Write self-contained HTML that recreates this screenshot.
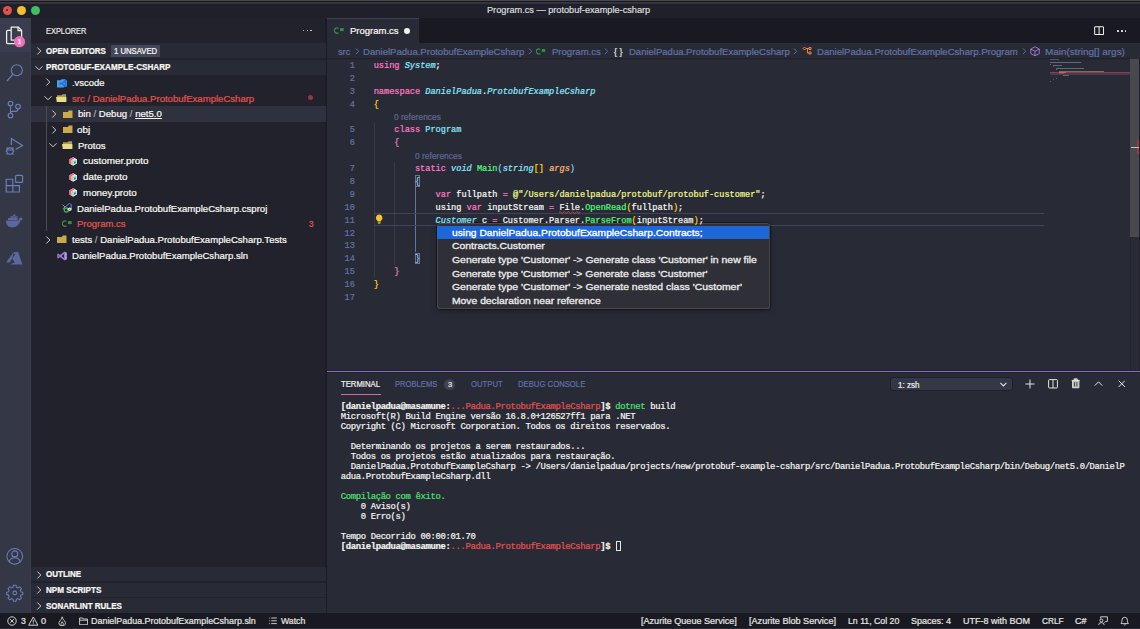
<!DOCTYPE html><html><head><meta charset="utf-8"><title>Program.cs — protobuf-example-csharp</title><style>

html,body{margin:0;padding:0;background:#282a36;}
body{width:1140px;height:629px;overflow:hidden;position:relative;font-family:"Liberation Sans",sans-serif;}
#r{position:absolute;left:0;top:0;width:1140px;height:629px;overflow:hidden;}
#r>div,#r>svg,#r>span{position:absolute;}
.t{white-space:pre;display:block;-webkit-text-stroke:0.22px;}
.c{white-space:pre;font-family:"Liberation Mono",monospace;display:block;}
i{font-style:italic}

</style></head><body><div id="r">
<div style="left:0px;top:0px;width:1140px;height:629px;background:#282a36;"></div>
<div style="left:0px;top:0px;width:1140px;height:1px;background:#4b4649;"></div>
<div style="left:0px;top:1px;width:1140px;height:1px;background:#17171c;"></div>
<div style="left:0px;top:2px;width:1140px;height:2px;background:linear-gradient(#3c3d49,#2b2c37);"></div>
<div style="left:0px;top:4px;width:1140px;height:14px;background:#1f202a;"></div>
<div style="left:2.5999999999999996px;top:5.800000000000001px;width:9px;height:9px;background:#e0524f;border-radius:50%;"></div>
<div style="left:16.9px;top:5.800000000000001px;width:9px;height:9px;background:#f2bf30;border-radius:50%;"></div>
<div style="left:31.200000000000003px;top:5.800000000000001px;width:9px;height:9px;background:#41be62;border-radius:50%;"></div>
<div style="left:6.2px;top:9.4px;width:1.8px;height:1.8px;background:#7c1512;border-radius:50%;"></div>
<div style="left:0px;top:18px;width:31px;height:595px;background:#343746;"></div>
<div style="left:0px;top:18px;width:31px;height:34.2px;background:#3a3d4e;"></div>
<div style="left:30px;top:18px;width:1px;height:595px;background:#3a3d4d;"></div>
<div style="left:31px;top:18px;width:295px;height:595px;background:#21222c;"></div>
<div style="left:325.3px;top:18px;width:1.5px;height:595px;background:#1b1c25;"></div>
<div style="left:31px;top:42.8px;width:295px;height:15.6px;background:#282a36;"></div>
<div style="left:31px;top:59.6px;width:295px;height:15.4px;background:#282a36;"></div>
<div style="left:31px;top:566.8px;width:295px;height:14.6px;background:#282a36;"></div>
<div style="left:31px;top:582.5px;width:295px;height:14.7px;background:#282a36;"></div>
<div style="left:31px;top:598.2px;width:295px;height:14.8px;background:#282a36;"></div>
<div style="left:302.85px;top:29.5px;width:1.5px;height:1.5px;background:#d8d8d4;border-radius:50%;"></div>
<div style="left:306.65px;top:29.5px;width:1.5px;height:1.5px;background:#d8d8d4;border-radius:50%;"></div>
<div style="left:310.45px;top:29.5px;width:1.5px;height:1.5px;background:#d8d8d4;border-radius:50%;"></div>
<svg style="left:34.90px;top:47.00px" width="8.0" height="8.0" viewBox="0 0 8 8"><path d="M2.3 0.5 L5.8 4 L2.3 7.5" fill="none" stroke="#cdcdc8" stroke-width="1.00"/></svg>
<div style="left:111px;top:45.2px;width:48.8px;height:11.8px;background:#44475a;border-radius:1px;"></div>
<svg style="left:34.60px;top:63.60px" width="8.0" height="8.0" viewBox="0 0 8 8"><path d="M0.5 2.3 L4 5.8 L7.5 2.3" fill="none" stroke="#cdcdc8" stroke-width="1.00"/></svg>
<svg style="left:34.90px;top:570.60px" width="8.0" height="8.0" viewBox="0 0 8 8"><path d="M2.3 0.5 L5.8 4 L2.3 7.5" fill="none" stroke="#cdcdc8" stroke-width="1.00"/></svg>
<svg style="left:34.90px;top:586.30px" width="8.0" height="8.0" viewBox="0 0 8 8"><path d="M2.3 0.5 L5.8 4 L2.3 7.5" fill="none" stroke="#cdcdc8" stroke-width="1.00"/></svg>
<svg style="left:34.90px;top:602.00px" width="8.0" height="8.0" viewBox="0 0 8 8"><path d="M2.3 0.5 L5.8 4 L2.3 7.5" fill="none" stroke="#cdcdc8" stroke-width="1.00"/></svg>
<div style="left:31px;top:105.9px;width:295px;height:15.7px;background:#2f313e;"></div>
<div style="left:45.6px;top:105.9px;width:1.1px;height:125.2px;background:#4d4a52;"></div>
<svg style="left:44.00px;top:78.40px" width="8.0" height="8.0" viewBox="0 0 8 8"><path d="M2.3 0.5 L5.8 4 L2.3 7.5" fill="none" stroke="#cdcdc8" stroke-width="1.00"/></svg>
<svg style="left:57.1px;top:78.80px" width="10" height="8.8" viewBox="0 0 20 17.6"><path d="M0 2.6 H7.4 L9.2 0.6 H17 V3 H20 V15 H15 L13 17 H0 Z" fill="#4a9fe6"/><path d="M15.6 1.6 L19 3.2 V14.8 L15.6 16.6 L8.6 10.4 L6.4 12.2 L5 11.4 V7 L6.4 6.2 L8.6 8 Z M15.4 6.4 L11.4 9.2 L15.4 12 Z" fill="#1d6ee0"/></svg>
<svg style="left:44.00px;top:94.12px" width="8.0" height="8.0" viewBox="0 0 8 8"><path d="M0.5 2.3 L4 5.8 L7.5 2.3" fill="none" stroke="#cdcdc8" stroke-width="1.00"/></svg>
<svg style="left:56px;top:93.92px" width="11" height="8.4" viewBox="0 0 11 8.4"><path d="M1 1.3 H5.6 L6.6 0.3 H10.1 V7.6 H1 Z" fill="#b39b49"/><rect x="7.3" y="0.9" width="2.4" height="1.7" fill="#8d92a6"/><path d="M0 2.9 H9.6 L10.4 3.3 V7.9 H0.8 Z" fill="#e9dd86"/></svg>
<div style="left:308.2px;top:95.4px;width:5px;height:5px;background:#8c3b42;border-radius:50%;"></div>
<svg style="left:49.70px;top:109.84px" width="8.0" height="8.0" viewBox="0 0 8 8"><path d="M2.3 0.5 L5.8 4 L2.3 7.5" fill="none" stroke="#cdcdc8" stroke-width="1.00"/></svg>
<svg style="left:63px;top:109.64px" width="9.6" height="8.2" viewBox="0 0 9.6 8.2"><path d="M0 1.9 H4.9 L5.8 0.5 H9.5 V8 H0 Z" fill="#c9aa4c"/></svg>
<svg style="left:49.70px;top:125.56px" width="8.0" height="8.0" viewBox="0 0 8 8"><path d="M2.3 0.5 L5.8 4 L2.3 7.5" fill="none" stroke="#cdcdc8" stroke-width="1.00"/></svg>
<svg style="left:63px;top:125.36px" width="9.6" height="8.2" viewBox="0 0 9.6 8.2"><path d="M0 1.9 H4.9 L5.8 0.5 H9.5 V8 H0 Z" fill="#c9aa4c"/></svg>
<svg style="left:49.00px;top:141.28px" width="8.0" height="8.0" viewBox="0 0 8 8"><path d="M0.5 2.3 L4 5.8 L7.5 2.3" fill="none" stroke="#cdcdc8" stroke-width="1.00"/></svg>
<svg style="left:62px;top:141.08px" width="11" height="8.4" viewBox="0 0 11 8.4"><path d="M1 1.3 H5.6 L6.6 0.3 H10.1 V7.6 H1 Z" fill="#b39b49"/><rect x="7.3" y="0.9" width="2.4" height="1.7" fill="#8d92a6"/><path d="M0 2.9 H9.6 L10.4 3.3 V7.9 H0.8 Z" fill="#e9dd86"/></svg>
<svg style="left:68.8px;top:156.90px" width="8.4" height="8.9" viewBox="0 0 17 18"><path d="M8.5 0.4 L16.2 4.7 V13.3 L8.5 17.6 L0.8 13.3 V4.7 Z" fill="#f1efea"/><path d="M8.5 0.4 L0.8 4.7 V13.3 L5 15.6 V6.6 L11.6 2.2 Z" fill="#e95fac"/><path d="M5 6.6 L10.6 3.6 L11 6.6 L8.4 8 V16.6 L5 15.4 Z" fill="#d2d95a"/><path d="M8.8 8.4 L15 5.8 V12.2 L8.8 15.2 Z" fill="#82c6f3"/><path d="M10.2 10 L13.4 8.8 V12 L10.2 13.4 Z" fill="#1d6fe0"/></svg>
<svg style="left:68.8px;top:172.62px" width="8.4" height="8.9" viewBox="0 0 17 18"><path d="M8.5 0.4 L16.2 4.7 V13.3 L8.5 17.6 L0.8 13.3 V4.7 Z" fill="#f1efea"/><path d="M8.5 0.4 L0.8 4.7 V13.3 L5 15.6 V6.6 L11.6 2.2 Z" fill="#e95fac"/><path d="M5 6.6 L10.6 3.6 L11 6.6 L8.4 8 V16.6 L5 15.4 Z" fill="#d2d95a"/><path d="M8.8 8.4 L15 5.8 V12.2 L8.8 15.2 Z" fill="#82c6f3"/><path d="M10.2 10 L13.4 8.8 V12 L10.2 13.4 Z" fill="#1d6fe0"/></svg>
<svg style="left:68.8px;top:188.34px" width="8.4" height="8.9" viewBox="0 0 17 18"><path d="M8.5 0.4 L16.2 4.7 V13.3 L8.5 17.6 L0.8 13.3 V4.7 Z" fill="#f1efea"/><path d="M8.5 0.4 L0.8 4.7 V13.3 L5 15.6 V6.6 L11.6 2.2 Z" fill="#e95fac"/><path d="M5 6.6 L10.6 3.6 L11 6.6 L8.4 8 V16.6 L5 15.4 Z" fill="#d2d95a"/><path d="M8.8 8.4 L15 5.8 V12.2 L8.8 15.2 Z" fill="#82c6f3"/><path d="M10.2 10 L13.4 8.8 V12 L10.2 13.4 Z" fill="#1d6fe0"/></svg>
<svg style="left:62.4px;top:202.96000000000004px" width="10.6" height="10.4" viewBox="0 0 21.2 20.8"><path d="M1 3.5 L6 8 L1.5 12" fill="none" stroke="#9aa3c4" stroke-width="1.8"/><path d="M6 8 L14.5 1 L18.5 3 V12" fill="none" stroke="#6d7fd0" stroke-width="2"/><circle cx="8.6" cy="14.2" r="4.2" fill="none" stroke="#3fb558" stroke-width="2.6"/><circle cx="15.6" cy="12.6" r="3.6" fill="#e6e6ea"/><circle cx="15.6" cy="12.6" r="1.3" fill="#50535f"/><rect x="11" y="11.4" width="3" height="2.6" fill="#e6e6ea"/></svg>
<svg style="left:62px;top:220.28000000000003px" width="10.5" height="7.2" viewBox="0 0 21 14.4"><path d="M9 3 A5.2 5.2 0 1 0 9 11.4" fill="none" stroke="#3b8b47" stroke-width="2.7"/><rect x="12" y="2.2" width="7.4" height="6" fill="#3b8b47"/></svg>
<svg style="left:44.00px;top:235.60px" width="8.0" height="8.0" viewBox="0 0 8 8"><path d="M2.3 0.5 L5.8 4 L2.3 7.5" fill="none" stroke="#cdcdc8" stroke-width="1.00"/></svg>
<svg style="left:57px;top:235.40000000000003px" width="9.6" height="8.2" viewBox="0 0 9.6 8.2"><path d="M0 1.9 H4.9 L5.8 0.5 H9.5 V8 H0 Z" fill="#c9aa4c"/></svg>
<svg style="left:56.6px;top:250.52px" width="10.2" height="10" viewBox="0 0 20.4 20"><path d="M14.6 1.2 L19.6 3.4 V16.6 L14.6 18.8 Z" fill="#b79cf2"/><path d="M15 3.4 L6 10 L15 16.6" fill="none" stroke="#9b7de0" stroke-width="3.2"/><path d="M1.6 5.6 V14.4 M1.6 6 L6.4 10 L1.6 14" fill="none" stroke="#9b7de0" stroke-width="2.2" stroke-linejoin="round"/></svg>
<svg style="left:0;top:18px" width="31" height="260" viewBox="0 0 31 260">
<g fill="none" stroke="#f1f1ec" stroke-width="1.25" stroke-linejoin="round">
<path d="M11.2 9 H18.2 L21.6 12.4 V22 H11.2 Z"/><path d="M18 9 V12.6 H21.6"/>
<path d="M11 12.4 H7.6 Q6.6 12.4 6.6 13.4 V24.6 Q6.6 25.6 7.6 25.6 H15.4 Q16.4 25.6 16.4 24.6 V22.2"/>
</g>
<circle cx="19.5" cy="23.7" r="5.6" fill="#f06fb8"/>
<g fill="none" stroke="#6b7fb8" stroke-width="1.15">
<circle cx="16.8" cy="52.2" r="5.5"/><path d="M13 56.2 L7 63"/>
<circle cx="10.5" cy="85.5" r="2.3"/><circle cx="10.5" cy="97.6" r="2.3"/><circle cx="18" cy="88.6" r="2.3"/>
<path d="M10.5 87.8 V95.3"/><path d="M18 90.9 Q18 93.4 15 93.4 H12.5 Q10.5 93.4 10.5 95"/>
<path d="M11.4 127 V120.5 L22.6 127.4 L15.6 131.6"/>
<circle cx="10" cy="133" r="3.2"/><path d="M6.5 129.5 L8 131 M13.5 129.5 L12 131 M5.6 133 H6.8 M13.2 133 H14.4 M6.5 136.6 L8 135.2 M13.5 136.6 L12 135.2 M7 132 H13"/>
<path d="M6.2 161.2 H12.8 V174 H6.2 Z M6.2 167.6 H19.4 V174 H12.8 M12.8 167.6 V174"/>
<rect x="15.6" y="157.4" width="7" height="7" rx="1"/>
</g>
<path d="M5.8 202.4 H18.5 Q19 199.6 21.2 199.2 Q21.8 200.6 22.8 200.8 Q22.2 202.2 20.6 202.6 Q18.4 209.4 12 209.4 Q6.4 209.4 5.8 202.4 Z M8 200 H17.6 V202 H8 Z M10.4 198.2 H17.6 V199.8 H10.4 Z M13 196.6 H15.4 V198 H13 Z" fill="#5b679d"/>
<path d="M13.8 234 H18.2 L22.4 246.4 H9.4 L14.8 244.6 L12.2 240.6 Z M13 235 L6 244.6 H9.6 L15.2 236.2 Z" fill="#5b679d"/>
</svg>
<svg style="left:4.5px;top:545.9px" width="20.6" height="58.07" viewBox="0 0 22 62">
<g fill="none" stroke="#6b7fb8" stroke-width="1.1">
<circle cx="10.4" cy="11" r="8.4"/><circle cx="10.4" cy="8.4" r="3.2"/><path d="M4.6 17 Q5.4 12.6 10.4 12.6 Q15.4 12.6 16.2 17"/>
<g transform="translate(0,2.4)"><circle cx="10.4" cy="47.8" r="2"/>
<path d="M9 39.4 H11.8 L12.2 41.6 L13.8 42.4 L15.8 41.2 L17.6 43.2 L16.4 45 L17 46.6 L19 47 V49.4 L17 49.8 L16.4 51.4 L17.6 53.2 L15.8 55 L13.8 53.8 L12.2 54.6 L11.8 56.6 H9 L8.6 54.6 L7 53.8 L5 55 L3.2 53.2 L4.4 51.4 L3.8 49.8 L1.8 49.4 V47 L3.8 46.6 L4.4 45 L3.2 43.2 L5 41.2 L7 42.4 L8.6 41.6 Z"/></g>
</g></svg>
<div style="left:327px;top:18px;width:813px;height:25px;background:#191a21;"></div>
<div style="left:327px;top:18px;width:92px;height:25px;background:#282a36;"></div>
<div style="left:327px;top:18px;width:92px;height:1px;background:#3d3f4d;"></div>
<svg style="left:333.8px;top:27.4px" width="10.5" height="7.2" viewBox="0 0 21 14.4"><path d="M9 3 A5.2 5.2 0 1 0 9 11.4" fill="none" stroke="#3b8b47" stroke-width="2.7"/><rect x="12" y="2.2" width="7.4" height="6" fill="#3b8b47"/></svg>
<div style="left:403.9px;top:28px;width:6.2px;height:6.2px;background:#f1f1ec;border-radius:50%;"></div>
<svg style="left:1093.9px;top:25.9px" width="10.2" height="9.3" viewBox="0 0 11 10"><rect x="0.7" y="0.7" width="9.6" height="8.6" rx="1" fill="none" stroke="#f1f1ec" stroke-width="1.1"/><path d="M5.5 0.7 V9.3" stroke="#f1f1ec" stroke-width="1.1"/></svg>
<div style="left:1117.15px;top:29.9px;width:1.7px;height:1.7px;background:#ecece8;border-radius:50%;"></div>
<div style="left:1120.95px;top:29.9px;width:1.7px;height:1.7px;background:#ecece8;border-radius:50%;"></div>
<div style="left:1124.75px;top:29.9px;width:1.7px;height:1.7px;background:#ecece8;border-radius:50%;"></div>
<div style="left:327px;top:43px;width:813px;height:15.7px;background:#282a36;"></div>
<svg style="left:353.72px;top:48.22px" width="6.56" height="6.56" viewBox="0 0 8 8"><path d="M2.3 0.5 L5.8 4 L2.3 7.5" fill="none" stroke="#5f6c98" stroke-width="1.22"/></svg>
<svg style="left:527.02px;top:48.22px" width="6.56" height="6.56" viewBox="0 0 8 8"><path d="M2.3 0.5 L5.8 4 L2.3 7.5" fill="none" stroke="#5f6c98" stroke-width="1.22"/></svg>
<svg style="left:536.4px;top:47.78px" width="9.975" height="6.84" viewBox="0 0 21 14.4"><path d="M9 3 A5.2 5.2 0 1 0 9 11.4" fill="none" stroke="#3b8b47" stroke-width="2.7"/><rect x="12" y="2.2" width="7.4" height="6" fill="#3b8b47"/></svg>
<svg style="left:603.12px;top:48.22px" width="6.56" height="6.56" viewBox="0 0 8 8"><path d="M2.3 0.5 L5.8 4 L2.3 7.5" fill="none" stroke="#5f6c98" stroke-width="1.22"/></svg>
<svg style="left:791.62px;top:48.22px" width="6.56" height="6.56" viewBox="0 0 8 8"><path d="M2.3 0.5 L5.8 4 L2.3 7.5" fill="none" stroke="#5f6c98" stroke-width="1.22"/></svg>
<svg style="left:802.4px;top:46.4px" width="10" height="10" viewBox="0 0 20 20"><g fill="none" stroke="#e8893c" stroke-width="2"><path d="M2 5 L5 2 L8 5 L5 8 Z"/><path d="M8 5 H14"/><path d="M11 5 V14 H14"/><path d="M14 3 h4 v4 h-4 z M14 12 h4 v4 h-4 z" /></g></svg>
<svg style="left:1020.62px;top:48.22px" width="6.56" height="6.56" viewBox="0 0 8 8"><path d="M2.3 0.5 L5.8 4 L2.3 7.5" fill="none" stroke="#5f6c98" stroke-width="1.22"/></svg>
<svg style="left:1030.4px;top:46.2px" width="10" height="10.6" viewBox="0 0 20 21"><g fill="none" stroke="#b180e8" stroke-width="1.7" stroke-linejoin="round"><path d="M10 1.5 L18.5 6 V15 L10 19.5 L1.5 15 V6 Z"/><path d="M1.5 6 L10 10.5 L18.5 6 M10 10.5 V19.5"/></g></svg>
<div style="left:327px;top:58.2px;width:803px;height:1.6px;background:linear-gradient(#1d1e27,#282a36);"></div>
<div style="left:373.5px;top:122.98999999999998px;width:0.8px;height:154.45800000000003px;background:#383a49;"></div>
<div style="left:394.3px;top:161.624px;width:0.8px;height:102.94600000000001px;background:#383a49;"></div>
<div style="left:415.3px;top:187.38px;width:0.9px;height:64.312px;background:#63759f;"></div>
<div style="left:373.6px;top:213.2px;width:670.4px;height:1px;background:#414458;"></div>
<div style="left:373.6px;top:224.9px;width:670.4px;height:1px;background:#414458;"></div>
<svg style="left:558.9px;top:210.55px" width="21.3" height="3.1" viewBox="0 0 21.3 3.1"><path d="M0 1.55 Q1.05 -0.45 2.10 1.55 Q3.15 3.54 4.20 1.55 Q5.25 -0.45 6.30 1.55 Q7.35 3.54 8.40 1.55 Q9.45 -0.45 10.50 1.55 Q11.55 3.54 12.60 1.55 Q13.65 -0.45 14.70 1.55 Q15.75 3.54 16.80 1.55 Q17.85 -0.45 18.90 1.55 Q19.95 3.54 21.00 1.55 Q21.15 -0.45 21.30 1.55" fill="none" stroke="#ee5350" stroke-width="0.85"/></svg>
<div style="left:414.7px;top:175.302px;width:5.6px;height:11.6px;background:transparent;border:0.7px solid #6f7284;box-sizing:border-box;"></div>
<div style="left:414.7px;top:252.57000000000002px;width:5.6px;height:11.6px;background:transparent;border:0.7px solid #6f7284;box-sizing:border-box;"></div>
<svg style="left:375.2px;top:213.94px" width="8.4" height="11" viewBox="0 0 17 22"><path d="M8.5 1 A6.6 6.6 0 0 0 4.4 12.8 Q5.4 13.8 5.4 15 H11.6 Q11.6 13.8 12.6 12.8 A6.6 6.6 0 0 0 8.5 1 Z" fill="#f5c431"/><rect x="5.6" y="15.8" width="5.8" height="1.8" fill="#e2b02a"/><rect x="6" y="18.4" width="5" height="1.8" fill="#c9982a"/></svg>
<div style="left:1050.0px;top:59.3px;width:9.308px;height:1px;background:#9a7ba0;opacity:.5;"></div>
<div style="left:1050.0px;top:62.16px;width:30.788px;height:1px;background:#8fa9c0;opacity:.5;"></div>
<div style="left:1050.0px;top:63.589999999999996px;width:0.716px;height:1px;background:#b9a24a;opacity:.5;"></div>
<div style="left:1052.864px;top:65.02px;width:9.308px;height:1px;background:#90a0b8;opacity:.5;"></div>
<div style="left:1052.864px;top:66.45px;width:0.716px;height:1px;background:#a070a0;opacity:.5;"></div>
<div style="left:1055.728px;top:67.88px;width:27.924px;height:1px;background:#8fb0a0;opacity:.5;"></div>
<div style="left:1055.728px;top:69.31px;width:0.716px;height:1px;background:#7fa0c0;opacity:.5;"></div>
<div style="left:1058.592px;top:70.74px;width:45.824px;height:1px;background:#b8bb88;opacity:.5;"></div>
<div style="left:1058.592px;top:72.17px;width:35.083999999999996px;height:1px;background:#a8b0a8;opacity:.5;"></div>
<div style="left:1058.592px;top:73.6px;width:37.232px;height:1px;background:#a0b8b0;opacity:.5;"></div>
<div style="left:1055.728px;top:77.89px;width:0.716px;height:1px;background:#7fa0c0;opacity:.5;"></div>
<div style="left:1052.864px;top:79.32px;width:0.716px;height:1px;background:#a070a0;opacity:.5;"></div>
<div style="left:1050.0px;top:80.75px;width:0.716px;height:1px;background:#b9a24a;opacity:.5;"></div>
<div style="left:1050px;top:72px;width:80px;height:1.3px;background:#a8323a;"></div>
<div style="left:1050px;top:73.4px;width:80px;height:1.4px;background:#3d4158;"></div>
<div style="left:1058.6px;top:72.0px;width:7px;height:1.3px;background:#e05555;"></div>
<div style="left:1058.6px;top:73.3px;width:5px;height:1.0px;background:#d04a4a;opacity:.6;"></div>
<div style="left:1063px;top:74.8px;width:6px;height:1px;background:#3fae58;opacity:.7;"></div>
<div style="left:1130px;top:59px;width:9px;height:178.4px;background:#48494f;"></div>
<div style="left:1139px;top:59px;width:1px;height:312px;background:#1f2029;"></div>
<div style="left:1130px;top:237.4px;width:0.8px;height:134px;background:#22232d;"></div>
<div style="left:1137.4px;top:139.6px;width:1.6px;height:14.4px;background:#a83840;opacity:.85;"></div>
<div style="left:1131px;top:146.9px;width:8.4px;height:0.9px;background:#c4c4c4;"></div>
<div style="left:436.5px;top:223.3px;width:333.3px;height:86.2px;background:#2f3037;border-radius:3.5px;box-shadow:inset 0 0 0 0.7px #505158, 0 0 0 0.7px #13131a, 0 2px 6px rgba(0,0,0,.3);"></div>
<div style="left:437.1px;top:226.1px;width:332.1px;height:13.3px;background:#1d67d8;"></div>
<div style="left:326.8px;top:371px;width:813.2px;height:242px;background:#282a36;"></div>
<div style="left:326.8px;top:369.9px;width:813.2px;height:2.9px;background:#21222c;"></div>
<div style="left:326.8px;top:370.55px;width:813.2px;height:1.5px;background:#8a6bc2;"></div>
<div style="left:341px;top:393.8px;width:39.6px;height:1px;background:#d66aa8;"></div>
<div style="left:444.2px;top:379.2px;width:11px;height:11px;background:#3f4254;border-radius:50%;"></div>
<div style="left:891.4px;top:378px;width:121px;height:12px;background:#343746;border-radius:2.5px;box-shadow:0 0 0 0.7px #1d1e27;"></div>
<svg style="left:1000.10px;top:381.00px" width="6.8" height="6.8" viewBox="0 0 8 8"><path d="M0.5 2.3 L4 5.8 L7.5 2.3" fill="none" stroke="#e8e8e4" stroke-width="1.18"/></svg>
<svg style="left:1024.6px;top:378.7px" width="10" height="10" viewBox="0 0 10 10"><path d="M5 0.5 V9.5 M0.5 5 H9.5" stroke="#e4e4e0" stroke-width="1"/></svg>
<svg style="left:1047.9px;top:379px" width="10" height="9.6" viewBox="0 0 10 9.6"><rect x="0.6" y="0.6" width="8.8" height="8.4" rx="0.8" fill="none" stroke="#e4e4e0" stroke-width="1"/><path d="M5 0.6 V9" stroke="#e4e4e0" stroke-width="1"/></svg>
<svg style="left:1070.6px;top:378.4px" width="9.4" height="10.6" viewBox="0 0 9.4 10.6"><path d="M0.6 2.4 H8.8 M3.2 2.2 V0.8 H6.2 V2.2 M1.5 2.6 V9.8 H7.9 V2.6 Z" fill="#bdbdb8" stroke="#e4e4e0" stroke-width="0.9"/><path d="M3.5 4.2 V8.4 M5.9 4.2 V8.4" stroke="#282a36" stroke-width="0.8"/></svg>
<svg style="left:1094px;top:380px" width="9" height="7" viewBox="0 0 9 7"><path d="M0.8 5.6 L4.5 1.8 L8.2 5.6" fill="none" stroke="#e4e4e0" stroke-width="1"/></svg>
<svg style="left:1117.5px;top:380px" width="7.6" height="7.6" viewBox="0 0 7.6 7.6"><path d="M0.6 0.6 L7 7 M7 0.6 L0.6 7" stroke="#e4e4e0" stroke-width="1"/></svg>
<div style="left:615.6px;top:541px;width:5.2px;height:9.8px;background:transparent;border:0.8px solid #e8e8e4;box-sizing:border-box;"></div>
<div style="left:0px;top:613px;width:1140px;height:16px;background:#191a21;"></div>
<div style="left:0px;top:628px;width:1140px;height:1px;background:#2a2b33;"></div>
<svg style="left:7.4px;top:616px" width="10" height="10" viewBox="0 0 10 10"><circle cx="5" cy="5" r="4.2" fill="none" stroke="#e6e6e2" stroke-width="0.9"/><path d="M3.2 3.2 L6.8 6.8 M6.8 3.2 L3.2 6.8" stroke="#e6e6e2" stroke-width="0.9"/></svg>
<svg style="left:27.8px;top:616px" width="10.6" height="10" viewBox="0 0 10.6 10"><path d="M5.3 1 L9.9 9.2 H0.7 Z" fill="none" stroke="#e6e6e2" stroke-width="0.9" stroke-linejoin="round"/><path d="M5.3 4 V6.6 M5.3 7.4 V8.2" stroke="#e6e6e2" stroke-width="0.9"/></svg>
<svg style="left:58.2px;top:615.6px" width="8.4" height="10.6" viewBox="0 0 8.4 10.6"><path d="M4.2 0.8 Q4.6 3 6.4 4.8 Q7.8 6.4 7.4 8 Q6.8 10 4.2 10 Q1.6 10 1 8 Q0.6 6.4 2 4.8 Q3.8 3 4.2 0.8 Z M4.2 5.6 Q2.8 7.6 3 8.6 Q3.4 9.8 4.2 9.8 Q5 9.8 5.4 8.6 Q5.6 7.6 4.2 5.6 Z" fill="none" stroke="#e6e6e2" stroke-width="0.8"/></svg>
<svg style="left:79.2px;top:616.6px" width="9.2" height="8.4" viewBox="0 0 9.2 8.4"><path d="M0.6 1 H3.6 L4.4 2 H8.6 V7.8 H0.6 Z M0.6 3.2 H8.6" fill="none" stroke="#e6e6e2" stroke-width="0.85"/></svg>
<svg style="left:268.8px;top:617.2px" width="8" height="7.6" viewBox="0 0 8 7.6"><path d="M2.2 1 H7.8 M2.2 3.8 H7.8 M2.2 6.6 H7.8 M0.2 1 H1 M0.2 3.8 H1 M0.2 6.6 H1" stroke="#e6e6e2" stroke-width="0.85"/></svg>
<svg style="left:1098px;top:616.4px" width="10" height="9.6" viewBox="0 0 10 9.6"><path d="M2.6 0.8 H9.4 V5.4 H7.6 L6.4 6.8 M2.6 0.8 V2.4" fill="none" stroke="#e6e6e2" stroke-width="0.85"/><circle cx="3.4" cy="4.4" r="1.5" fill="none" stroke="#e6e6e2" stroke-width="0.85"/><path d="M0.6 9 Q0.8 6.6 3.4 6.6 Q6 6.6 6.2 9" fill="none" stroke="#e6e6e2" stroke-width="0.85"/></svg>
<svg style="left:1119.6px;top:616px" width="9.4" height="10" viewBox="0 0 9.4 10"><path d="M1 7.6 Q2 6.6 2 4.4 Q2 1.2 4.7 1.2 Q7.4 1.2 7.4 4.4 Q7.4 6.6 8.4 7.6 Z M3.8 8.6 Q4.7 9.6 5.6 8.6" fill="none" stroke="#e6e6e2" stroke-width="0.85" stroke-linejoin="round"/></svg>
<span class="t" id="t0" style="left:487px;top:4px;height:13.02px;line-height:13.02px;font-size:9.3px;color:#dcdcdc;transform:scaleX(0.9870);transform-origin:0 50%;">Program.cs — protobuf-example-csharp</span>
<span class="t" id="t1" style="left:45.9px;top:26px;height:11.48px;line-height:11.48px;font-size:8.2px;color:#e6e6e1;transform:scaleX(0.9060);transform-origin:0 50%;">EXPLORER</span>
<span class="t" id="t2" style="left:45.9px;top:46px;height:11.48px;line-height:11.48px;font-size:8.2px;color:#f8f8f2;font-weight:700;transform:scaleX(0.9703);transform-origin:0 50%;">OPEN EDITORS</span>
<span class="t" id="t3" style="left:113.9px;top:46px;height:11.48px;line-height:11.48px;font-size:8.2px;color:#f8f8f2;transform:scaleX(0.9408);transform-origin:0 50%;">1 UNSAVED</span>
<span class="t" id="t4" style="left:45.9px;top:62px;height:11.48px;line-height:11.48px;font-size:8.2px;color:#f8f8f2;font-weight:700;transform:scaleX(0.9928);transform-origin:0 50%;">PROTOBUF-EXAMPLE-CSHARP</span>
<span class="t" id="t5" style="left:46px;top:569px;height:11.48px;line-height:11.48px;font-size:8.2px;color:#f8f8f2;font-weight:700;transform:scaleX(0.9795);transform-origin:0 50%;">OUTLINE</span>
<span class="t" id="t6" style="left:46px;top:585px;height:11.48px;line-height:11.48px;font-size:8.2px;color:#f8f8f2;font-weight:700;transform:scaleX(0.9898);transform-origin:0 50%;">NPM SCRIPTS</span>
<span class="t" id="t7" style="left:46px;top:601px;height:11.48px;line-height:11.48px;font-size:8.2px;color:#f8f8f2;font-weight:700;transform:scaleX(0.9745);transform-origin:0 50%;">SONARLINT RULES</span>
<span class="t" id="t8" style="left:71.8px;top:76px;height:13.16px;line-height:13.16px;font-size:9.4px;color:#f8f8f2;transform:scaleX(1.0027);transform-origin:0 50%;">.vscode</span>
<span class="t" id="t9" style="left:72px;top:92px;height:13.16px;line-height:13.16px;font-size:9.4px;color:#e5534f;transform:scaleX(1.0193);transform-origin:0 50%;">src / DanielPadua.ProtobufExampleCsharp</span>
<span class="t" id="t10" style="left:77.7px;top:107px;height:13.16px;line-height:13.16px;font-size:9.4px;color:#f8f8f2;transform:scaleX(1.0247);transform-origin:0 50%;">bin <span style="color:#a9aaac">/</span> Debug <span style="color:#a9aaac">/</span> <span style="text-decoration:underline">net5.0</span></span>
<span class="t" id="t11" style="left:77.4px;top:123px;height:13.16px;line-height:13.16px;font-size:9.4px;color:#f8f8f2;transform:scaleX(1.0467);transform-origin:0 50%;">obj</span>
<span class="t" id="t12" style="left:77.5px;top:139px;height:13.16px;line-height:13.16px;font-size:9.4px;color:#f8f8f2;transform:scaleX(1.0144);transform-origin:0 50%;">Protos</span>
<span class="t" id="t13" style="left:83px;top:154px;height:13.16px;line-height:13.16px;font-size:9.4px;color:#f8f8f2;transform:scaleX(1.0578);transform-origin:0 50%;">customer.proto</span>
<span class="t" id="t14" style="left:83px;top:170px;height:13.16px;line-height:13.16px;font-size:9.4px;color:#f8f8f2;transform:scaleX(1.0536);transform-origin:0 50%;">date.proto</span>
<span class="t" id="t15" style="left:83px;top:186px;height:13.16px;line-height:13.16px;font-size:9.4px;color:#f8f8f2;transform:scaleX(1.0443);transform-origin:0 50%;">money.proto</span>
<span class="t" id="t16" style="left:77.4px;top:202px;height:13.16px;line-height:13.16px;font-size:9.4px;color:#f8f8f2;transform:scaleX(1.0229);transform-origin:0 50%;">DanielPadua.ProtobufExampleCsharp.csproj</span>
<span class="t" id="t17" style="left:77.4px;top:217px;height:13.16px;line-height:13.16px;font-size:9.4px;color:#e5534f;transform:scaleX(1.0138);transform-origin:0 50%;">Program.cs</span>
<span class="t" id="t18" style="left:308.6px;top:218px;height:12.04px;line-height:12.04px;font-size:8.6px;color:#e5534f;transform:scaleX(0.9621);transform-origin:0 50%;">3</span>
<span class="t" id="t19" style="left:72px;top:233px;height:13.16px;line-height:13.16px;font-size:9.4px;color:#f8f8f2;transform:scaleX(1.0197);transform-origin:0 50%;">tests <span style="color:#a9aaac">/</span> DanielPadua.ProtobufExampleCsharp.Tests</span>
<span class="t" id="t20" style="left:71.6px;top:249px;height:13.16px;line-height:13.16px;font-size:9.4px;color:#f8f8f2;transform:scaleX(1.0177);transform-origin:0 50%;">DanielPadua.ProtobufExampleCsharp.sln</span>
<span class="t" id="t21" style="left:17.9px;top:37px;height:9.24px;line-height:9.24px;font-size:6.6px;color:#fff;font-weight:700;transform:scaleX(0.8443);transform-origin:0 50%;">1</span>
<span class="t" id="t22" style="left:349.6px;top:24px;height:13.16px;line-height:13.16px;font-size:9.4px;color:#f8f8f2;transform:scaleX(1.0138);transform-origin:0 50%;">Program.cs</span>
<span class="t" id="t23" style="left:338.3px;top:46px;height:13.02px;line-height:13.02px;font-size:9.3px;color:#6272a4;transform:scaleX(0.9914);transform-origin:0 50%;">src</span>
<span class="t" id="t24" style="left:362.8px;top:46px;height:13.02px;line-height:13.02px;font-size:9.3px;color:#6272a4;transform:scaleX(1.0273);transform-origin:0 50%;">DanielPadua.ProtobufExampleCsharp</span>
<span class="t" id="t25" style="left:551.6px;top:46px;height:13.02px;line-height:13.02px;font-size:9.3px;color:#6272a4;transform:scaleX(1.0267);transform-origin:0 50%;">Program.cs</span>
<span class="t" id="t26" style="left:613.9px;top:46px;height:13.02px;line-height:13.02px;font-size:9.3px;color:#e2e2de;transform:scaleX(0.9549);transform-origin:0 50%;">{ }</span>
<span class="t" id="t27" style="left:628.5px;top:46px;height:13.02px;line-height:13.02px;font-size:9.3px;color:#6272a4;transform:scaleX(1.0229);transform-origin:0 50%;">DanielPadua.ProtobufExampleCsharp</span>
<span class="t" id="t28" style="left:817.2px;top:46px;height:13.02px;line-height:13.02px;font-size:9.3px;color:#6272a4;transform:scaleX(1.0279);transform-origin:0 50%;">DanielPadua.ProtobufExampleCsharp.Program</span>
<span class="t" id="t29" style="left:1045.3px;top:46px;height:13.02px;line-height:13.02px;font-size:9.3px;color:#6272a4;transform:scaleX(1.0664);transform-origin:0 50%;">Main(string[] args)</span>
<span class="t" id="t30" style="left:327px;top:60px;height:12.04px;line-height:12.04px;font-size:8.6px;color:#6272a4;font-family:'Liberation Mono',monospace;width:27.9px;text-align:right;">1</span>
<span class="t" id="t31" style="left:327px;top:73px;height:12.04px;line-height:12.04px;font-size:8.6px;color:#6272a4;font-family:'Liberation Mono',monospace;width:27.9px;text-align:right;">2</span>
<span class="t" id="t32" style="left:327px;top:86px;height:12.04px;line-height:12.04px;font-size:8.6px;color:#6272a4;font-family:'Liberation Mono',monospace;width:27.9px;text-align:right;">3</span>
<span class="t" id="t33" style="left:327px;top:99px;height:12.04px;line-height:12.04px;font-size:8.6px;color:#6272a4;font-family:'Liberation Mono',monospace;width:27.9px;text-align:right;">4</span>
<span class="t" id="t34" style="left:327px;top:124px;height:12.04px;line-height:12.04px;font-size:8.6px;color:#6272a4;font-family:'Liberation Mono',monospace;width:27.9px;text-align:right;">5</span>
<span class="t" id="t35" style="left:327px;top:137px;height:12.04px;line-height:12.04px;font-size:8.6px;color:#6272a4;font-family:'Liberation Mono',monospace;width:27.9px;text-align:right;">6</span>
<span class="t" id="t36" style="left:327px;top:163px;height:12.04px;line-height:12.04px;font-size:8.6px;color:#6272a4;font-family:'Liberation Mono',monospace;width:27.9px;text-align:right;">7</span>
<span class="t" id="t37" style="left:327px;top:176px;height:12.04px;line-height:12.04px;font-size:8.6px;color:#6272a4;font-family:'Liberation Mono',monospace;width:27.9px;text-align:right;">8</span>
<span class="t" id="t38" style="left:327px;top:189px;height:12.04px;line-height:12.04px;font-size:8.6px;color:#6272a4;font-family:'Liberation Mono',monospace;width:27.9px;text-align:right;">9</span>
<span class="t" id="t39" style="left:327px;top:202px;height:12.04px;line-height:12.04px;font-size:8.6px;color:#6272a4;font-family:'Liberation Mono',monospace;width:27.9px;text-align:right;">10</span>
<span class="t" id="t40" style="left:327px;top:215px;height:12.04px;line-height:12.04px;font-size:8.6px;color:#6272a4;font-family:'Liberation Mono',monospace;width:27.9px;text-align:right;">11</span>
<span class="t" id="t41" style="left:327px;top:228px;height:12.04px;line-height:12.04px;font-size:8.6px;color:#6272a4;font-family:'Liberation Mono',monospace;width:27.9px;text-align:right;">12</span>
<span class="t" id="t42" style="left:327px;top:240px;height:12.04px;line-height:12.04px;font-size:8.6px;color:#6272a4;font-family:'Liberation Mono',monospace;width:27.9px;text-align:right;">13</span>
<span class="t" id="t43" style="left:327px;top:253px;height:12.04px;line-height:12.04px;font-size:8.6px;color:#6272a4;font-family:'Liberation Mono',monospace;width:27.9px;text-align:right;">14</span>
<span class="t" id="t44" style="left:327px;top:266px;height:12.04px;line-height:12.04px;font-size:8.6px;color:#6272a4;font-family:'Liberation Mono',monospace;width:27.9px;text-align:right;">15</span>
<span class="t" id="t45" style="left:327px;top:279px;height:12.04px;line-height:12.04px;font-size:8.6px;color:#6272a4;font-family:'Liberation Mono',monospace;width:27.9px;text-align:right;">16</span>
<span class="t" id="t46" style="left:327px;top:292px;height:12.04px;line-height:12.04px;font-size:8.6px;color:#6272a4;font-family:'Liberation Mono',monospace;width:27.9px;text-align:right;">17</span>
<span class="t" id="t47" style="left:373.7px;top:60px;height:12.04px;line-height:12.04px;font-size:8.6px;color:#f8f8f2;font-family:'Liberation Mono',monospace;"><span style="color:#ff79c6">using</span> <span style="color:#8be9fd"><i>System</i></span>;</span>
<span class="t" id="t48" style="left:373.7px;top:86px;height:12.04px;line-height:12.04px;font-size:8.6px;color:#f8f8f2;font-family:'Liberation Mono',monospace;"><span style="color:#ff79c6">namespace</span> <span style="color:#8be9fd"><i>DanielPadua</i></span>.<span style="color:#8be9fd"><i>ProtobufExampleCsharp</i></span></span>
<span class="t" id="t49" style="left:373.7px;top:99px;height:12.04px;line-height:12.04px;font-size:8.6px;color:#f8f8f2;font-family:'Liberation Mono',monospace;"><span style="color:#ffd700">{</span></span>
<span class="t" id="t50" style="left:394.3px;top:112px;height:11.48px;line-height:11.48px;font-size:8.2px;color:#5d6994;transform:scaleX(1.0326);transform-origin:0 50%;">0 references</span>
<span class="t" id="t51" style="left:373.7px;top:124px;height:12.04px;line-height:12.04px;font-size:8.6px;color:#f8f8f2;font-family:'Liberation Mono',monospace;">    <span style="color:#ff79c6">class</span> <span style="color:#8be9fd">Program</span></span>
<span class="t" id="t52" style="left:373.7px;top:137px;height:12.04px;line-height:12.04px;font-size:8.6px;color:#f8f8f2;font-family:'Liberation Mono',monospace;">    <span style="color:#f07cc0">{</span></span>
<span class="t" id="t53" style="left:415px;top:151px;height:11.48px;line-height:11.48px;font-size:8.2px;color:#5d6994;transform:scaleX(1.0304);transform-origin:0 50%;">0 references</span>
<span class="t" id="t54" style="left:373.7px;top:163px;height:12.04px;line-height:12.04px;font-size:8.6px;color:#f8f8f2;font-family:'Liberation Mono',monospace;">        <span style="color:#ff79c6">static</span> <span style="color:#8be9fd"><i>void</i></span> <span style="color:#50fa7b">Main</span><span style="color:#87cefa">(</span><span style="color:#8be9fd"><i>string</i></span><span style="color:#ffd700">[]</span> <span style="color:#ffb86c"><i>args</i></span><span style="color:#87cefa">)</span></span>
<span class="t" id="t55" style="left:373.7px;top:176px;height:12.04px;line-height:12.04px;font-size:8.6px;color:#f8f8f2;font-family:'Liberation Mono',monospace;">        <span style="color:#87cefa">{</span></span>
<span class="t" id="t56" style="left:373.7px;top:189px;height:12.04px;line-height:12.04px;font-size:8.6px;color:#f8f8f2;font-family:'Liberation Mono',monospace;">            <span style="color:#ff79c6">var</span> fullpath <span style="color:#ff79c6">=</span> <span style="color:#f1fa8c">@"/Users/danielpadua/protobuf/protobuf-customer"</span>;</span>
<span class="t" id="t57" style="left:373.7px;top:202px;height:12.04px;line-height:12.04px;font-size:8.6px;color:#f8f8f2;font-family:'Liberation Mono',monospace;">            using <span style="color:#ff79c6">var</span> inputStream <span style="color:#ff79c6">=</span> File.<span style="color:#50fa7b">OpenRead</span><span style="color:#ffd700">(</span>fullpath<span style="color:#ffd700">)</span>;</span>
<span class="t" id="t58" style="left:373.7px;top:215px;height:12.04px;line-height:12.04px;font-size:8.6px;color:#f8f8f2;font-family:'Liberation Mono',monospace;">            <span style="color:#8be9fd"><i>Customer</i></span> c <span style="color:#ff79c6">=</span> Customer.Parser.<span style="color:#50fa7b">ParseFrom</span><span style="color:#ffd700">(</span>inputStream<span style="color:#ffd700">)</span>;</span>
<span class="t" id="t59" style="left:373.7px;top:253px;height:12.04px;line-height:12.04px;font-size:8.6px;color:#f8f8f2;font-family:'Liberation Mono',monospace;">        <span style="color:#87cefa">}</span></span>
<span class="t" id="t60" style="left:373.7px;top:266px;height:12.04px;line-height:12.04px;font-size:8.6px;color:#f8f8f2;font-family:'Liberation Mono',monospace;">    <span style="color:#f07cc0">}</span></span>
<span class="t" id="t61" style="left:373.7px;top:279px;height:12.04px;line-height:12.04px;font-size:8.6px;color:#f8f8f2;font-family:'Liberation Mono',monospace;"><span style="color:#ffd700">}</span></span>
<span class="t" id="t62" style="left:451.6px;top:226px;height:13.72px;line-height:13.72px;font-size:9.8px;color:#ffffff;transform:scaleX(1.0482);transform-origin:0 50%;-webkit-text-stroke:0.32px;">using DanielPadua.ProtobufExampleCsharp.Contracts;</span>
<span class="t" id="t63" style="left:451.6px;top:239px;height:13.72px;line-height:13.72px;font-size:9.8px;color:#ececec;transform:scaleX(1.0640);transform-origin:0 50%;-webkit-text-stroke:0.32px;">Contracts.Customer</span>
<span class="t" id="t64" style="left:451.6px;top:253px;height:13.72px;line-height:13.72px;font-size:9.8px;color:#ececec;transform:scaleX(1.0640);transform-origin:0 50%;-webkit-text-stroke:0.32px;">Generate type 'Customer' -&gt; Generate class 'Customer' in new file</span>
<span class="t" id="t65" style="left:451.6px;top:267px;height:13.72px;line-height:13.72px;font-size:9.8px;color:#ececec;transform:scaleX(1.0630);transform-origin:0 50%;-webkit-text-stroke:0.32px;">Generate type 'Customer' -&gt; Generate class 'Customer'</span>
<span class="t" id="t66" style="left:451.6px;top:280px;height:13.72px;line-height:13.72px;font-size:9.8px;color:#ececec;transform:scaleX(1.0642);transform-origin:0 50%;-webkit-text-stroke:0.32px;">Generate type 'Customer' -&gt; Generate nested class 'Customer'</span>
<span class="t" id="t67" style="left:451.6px;top:294px;height:13.72px;line-height:13.72px;font-size:9.8px;color:#ececec;transform:scaleX(1.0543);transform-origin:0 50%;-webkit-text-stroke:0.32px;">Move declaration near reference</span>
<span class="t" id="t68" style="left:341px;top:379px;height:11.48px;line-height:11.48px;font-size:8.2px;color:#efefea;transform:scaleX(0.9419);transform-origin:0 50%;">TERMINAL</span>
<span class="t" id="t69" style="left:395px;top:379px;height:11.48px;line-height:11.48px;font-size:8.2px;color:#5f6fa3;transform:scaleX(0.9297);transform-origin:0 50%;">PROBLEMS</span>
<span class="t" id="t70" style="left:447.6px;top:380px;height:10.64px;line-height:10.64px;font-size:7.6px;color:#e8e8e4;transform:scaleX(0.9919);transform-origin:0 50%;">3</span>
<span class="t" id="t71" style="left:471.3px;top:379px;height:11.48px;line-height:11.48px;font-size:8.2px;color:#5f6fa3;transform:scaleX(0.9414);transform-origin:0 50%;">OUTPUT</span>
<span class="t" id="t72" style="left:518.4px;top:379px;height:11.48px;line-height:11.48px;font-size:8.2px;color:#5f6fa3;transform:scaleX(0.9421);transform-origin:0 50%;">DEBUG CONSOLE</span>
<span class="t" id="t73" style="left:897.8px;top:380px;height:11.76px;line-height:11.76px;font-size:8.4px;color:#eeeeea;transform:scaleX(0.9571);transform-origin:0 50%;">1: zsh</span>
<span class="t" id="t74" style="left:340.7px;top:401px;height:12.46px;line-height:12.46px;font-size:8.9px;color:#f4f4ee;font-family:'Liberation Mono',monospace;letter-spacing:-0.333px;"><b>[danielpadua@masamune:</b><span style="color:#e4534f">...Padua.ProtobufExampleCsharp</span><b>]$</b> <span style="color:#4be070">dotnet</span> build</span>
<span class="t" id="t75" style="left:340.7px;top:411px;height:12.46px;line-height:12.46px;font-size:8.9px;color:#f4f4ee;font-family:'Liberation Mono',monospace;letter-spacing:-0.333px;">Microsoft(R) Build Engine versão 16.8.0+126527ff1 para .NET</span>
<span class="t" id="t76" style="left:340.7px;top:421px;height:12.46px;line-height:12.46px;font-size:8.9px;color:#f4f4ee;font-family:'Liberation Mono',monospace;letter-spacing:-0.333px;">Copyright (C) Microsoft Corporation. Todos os direitos reservados.</span>
<span class="t" id="t77" style="left:340.7px;top:441px;height:12.46px;line-height:12.46px;font-size:8.9px;color:#f4f4ee;font-family:'Liberation Mono',monospace;letter-spacing:-0.333px;">  Determinando os projetos a serem restaurados...</span>
<span class="t" id="t78" style="left:340.7px;top:451px;height:12.46px;line-height:12.46px;font-size:8.9px;color:#f4f4ee;font-family:'Liberation Mono',monospace;letter-spacing:-0.333px;">  Todos os projetos estão atualizados para restauração.</span>
<span class="t" id="t79" style="left:340.7px;top:461px;height:12.46px;line-height:12.46px;font-size:8.9px;color:#f4f4ee;font-family:'Liberation Mono',monospace;letter-spacing:-0.333px;">  DanielPadua.ProtobufExampleCsharp -&gt; /Users/danielpadua/projects/new/protobuf-example-csharp/src/DanielPadua.ProtobufExampleCsharp/bin/Debug/net5.0/DanielP</span>
<span class="t" id="t80" style="left:340.7px;top:471px;height:12.46px;line-height:12.46px;font-size:8.9px;color:#f4f4ee;font-family:'Liberation Mono',monospace;letter-spacing:-0.333px;">adua.ProtobufExampleCsharp.dll</span>
<span class="t" id="t81" style="left:340.7px;top:491px;height:12.46px;line-height:12.46px;font-size:8.9px;color:#f4f4ee;font-family:'Liberation Mono',monospace;letter-spacing:-0.333px;"><span style="color:#4be070">Compilação com êxito.</span></span>
<span class="t" id="t82" style="left:340.7px;top:501px;height:12.46px;line-height:12.46px;font-size:8.9px;color:#f4f4ee;font-family:'Liberation Mono',monospace;letter-spacing:-0.333px;">    0 Aviso(s)</span>
<span class="t" id="t83" style="left:340.7px;top:511px;height:12.46px;line-height:12.46px;font-size:8.9px;color:#f4f4ee;font-family:'Liberation Mono',monospace;letter-spacing:-0.333px;">    0 Erro(s)</span>
<span class="t" id="t84" style="left:340.7px;top:531px;height:12.46px;line-height:12.46px;font-size:8.9px;color:#f4f4ee;font-family:'Liberation Mono',monospace;letter-spacing:-0.333px;">Tempo Decorrido 00:00:01.70</span>
<span class="t" id="t85" style="left:340.7px;top:541px;height:12.46px;line-height:12.46px;font-size:8.9px;color:#f4f4ee;font-family:'Liberation Mono',monospace;letter-spacing:-0.333px;"><b>[danielpadua@masamune:</b><span style="color:#e4534f">...Padua.ProtobufExampleCsharp</span><b>]$</b> </span>
<span class="t" id="t86" style="left:20.5px;top:615px;height:13.02px;line-height:13.02px;font-size:9.3px;color:#e6e6e2;transform:scaleX(0.9281);transform-origin:0 50%;">3</span>
<span class="t" id="t87" style="left:40.7px;top:615px;height:13.02px;line-height:13.02px;font-size:9.3px;color:#e6e6e2;transform:scaleX(0.9861);transform-origin:0 50%;">0</span>
<span class="t" id="t88" style="left:91.2px;top:615px;height:13.02px;line-height:13.02px;font-size:9.3px;color:#e6e6e2;transform:scaleX(0.9605);transform-origin:0 50%;">DanielPadua.ProtobufExampleCsharp.sln</span>
<span class="t" id="t89" style="left:280.7px;top:615px;height:13.02px;line-height:13.02px;font-size:9.3px;color:#e6e6e2;transform:scaleX(0.9341);transform-origin:0 50%;">Watch</span>
<span class="t" id="t90" style="left:641.2px;top:615px;height:13.02px;line-height:13.02px;font-size:9.3px;color:#e6e6e2;transform:scaleX(0.9757);transform-origin:0 50%;">[Azurite Queue Service]</span>
<span class="t" id="t91" style="left:749px;top:615px;height:13.02px;line-height:13.02px;font-size:9.3px;color:#e6e6e2;transform:scaleX(0.9789);transform-origin:0 50%;">[Azurite Blob Service]</span>
<span class="t" id="t92" style="left:848.4px;top:615px;height:13.02px;line-height:13.02px;font-size:9.3px;color:#e6e6e2;transform:scaleX(0.9391);transform-origin:0 50%;">Ln 11, Col 20</span>
<span class="t" id="t93" style="left:911px;top:615px;height:13.02px;line-height:13.02px;font-size:9.3px;color:#e6e6e2;transform:scaleX(0.9671);transform-origin:0 50%;">Spaces: 4</span>
<span class="t" id="t94" style="left:963px;top:615px;height:13.02px;line-height:13.02px;font-size:9.3px;color:#e6e6e2;transform:scaleX(0.9679);transform-origin:0 50%;">UTF-8 with BOM</span>
<span class="t" id="t95" style="left:1042px;top:615px;height:13.02px;line-height:13.02px;font-size:9.3px;color:#e6e6e2;transform:scaleX(0.8937);transform-origin:0 50%;">CRLF</span>
<span class="t" id="t96" style="left:1075px;top:615px;height:13.02px;line-height:13.02px;font-size:9.3px;color:#e6e6e2;transform:scaleX(0.9756);transform-origin:0 50%;">C#</span>
</div></body></html>
